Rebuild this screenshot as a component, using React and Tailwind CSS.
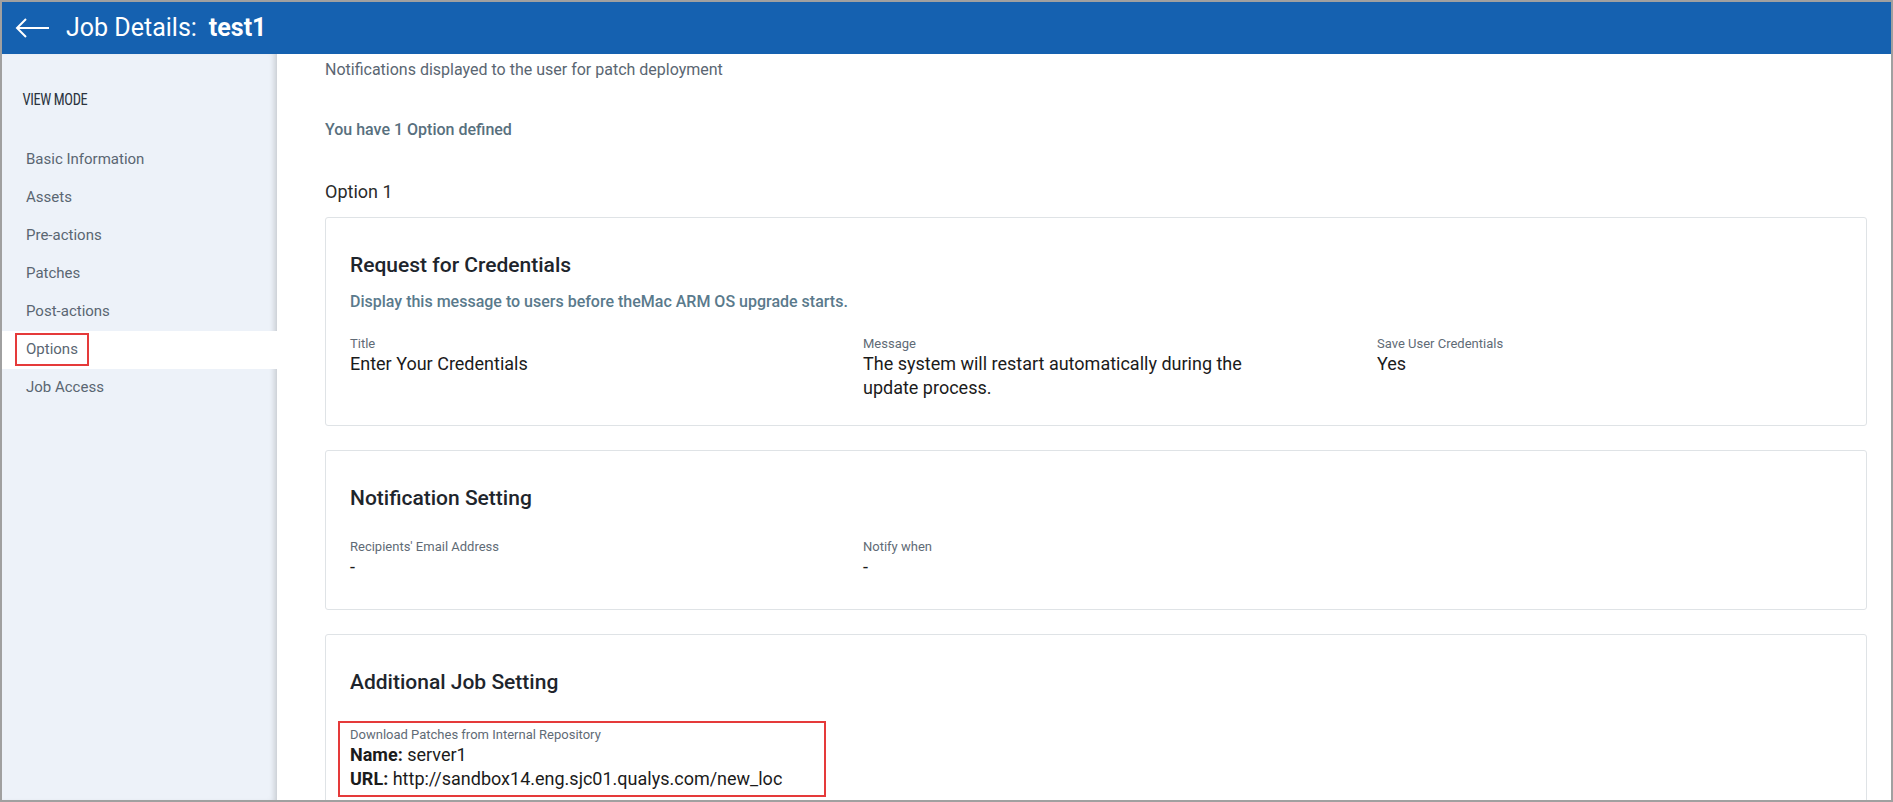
export default function App() {
  const nav = ["Basic Information", "Assets", "Pre-actions", "Patches", "Post-actions", "Options", "Job Access"];
  const Label = ({ children }) => <div className="text-[13px] text-[#5f6b76] leading-[16px]">{children}</div>;
  const Val = ({ children }) => <div className="text-[18px] text-[#1b1b1b] leading-[24px]">{children}</div>;
  return (
    <div className="w-[1893px] h-[802px] overflow-hidden border-2 border-[#a0a0a0] flex flex-col bg-white" style={{ fontFamily: "Roboto, 'Liberation Sans', sans-serif" }}>
      <div className="h-[52px] bg-[#1561b0] flex items-center px-[12px] text-white shrink-0">
        <svg width="36" height="22" viewBox="0 0 36 22" fill="none" stroke="white" strokeWidth="2"><path d="M35 11H3M12 2L3 11l9 9" /></svg>
        <span className="ml-[16px] text-[25px]">Job Details:</span>
        <span className="ml-[12px] text-[25px] font-bold">test1</span>
      </div>
      <div className="flex flex-1 min-h-0">
        <div className="w-[275px] shrink-0 bg-[#edf2f9] shadow-[inset_-6px_0_6px_-4px_rgba(0,0,0,0.18)]">
          <div className="pl-[24px] pt-[33px] text-[17px] text-[#2b3440] tracking-tight" style={{ fontFamily: "'Liberation Sans Narrow', 'Roboto Condensed', Roboto, sans-serif", transform: "scaleX(0.85)", transformOrigin: "left" }}>VIEW MODE</div>
          <div className="mt-[28px] flex flex-col">
            {nav.map((n) => (
              <div key={n} className={`h-[38px] flex items-center pl-[24px] text-[15px] text-[#5a6672] ${n === "Options" ? "bg-white" : ""}`}>
                {n === "Options" ? <span className="border-2 border-[#e53a3a] px-[9px] py-[3px] -ml-[11px]">Options</span> : n}
              </div>
            ))}
          </div>
        </div>
        <div className="flex-1 pl-[48px] pr-[24px] min-w-0">
          <div className="pt-[4px] text-[16px] text-[#5a6672]">Notifications displayed to the user for patch deployment</div>
          <div className="mt-[36px] text-[16px] font-medium text-[#58707e]">You have 1 Option defined</div>
          <div className="mt-[36px] text-[18px] text-[#2b2b2b]">Option 1</div>
          <div className="mt-[12px] border border-[#dfe3e6] rounded-[3px] h-[209px] px-[24px] pt-[32px]">
            <div className="text-[21px] font-medium text-[#1e252c]">Request for Credentials</div>
            <div className="mt-[8px] text-[16px] font-medium text-[#5a7a8c]">Display this message to users before theMac ARM OS upgrade starts.</div>
            <div className="mt-[22px] grid grid-cols-[513px_514px_1fr]">
              <div><Label>Title</Label><Val>Enter Your Credentials</Val></div>
              <div className="w-[430px]"><Label>Message</Label><Val>The system will restart automatically during the update process.</Val></div>
              <div><Label>Save User Credentials</Label><Val>Yes</Val></div>
            </div>
          </div>
          <div className="mt-[24px] border border-[#dfe3e6] rounded-[3px] h-[160px] px-[24px] pt-[32px]">
            <div className="text-[21px] font-medium text-[#1e252c]">Notification Setting</div>
            <div className="mt-[24px] grid grid-cols-[513px_1fr]">
              <div><Label>Recipients' Email Address</Label><Val>-</Val></div>
              <div><Label>Notify when</Label><Val>-</Val></div>
            </div>
          </div>
          <div className="mt-[24px] border border-[#dfe3e6] rounded-[3px] h-[200px] px-[24px] pt-[32px]">
            <div className="text-[21px] font-medium text-[#1e252c]">Additional Job Setting</div>
            <div className="mt-[22px] -ml-[12px] w-[488px] border-2 border-[#e53a3a] px-[10px] py-[4px]">
              <Label>Download Patches from Internal Repository</Label>
              <Val><b className="font-bold">Name:</b> server1</Val>
              <Val><b className="font-bold">URL:</b> http://sandbox14.eng.sjc01.qualys.com/new_loc</Val>
            </div>
          </div>
        </div>
      </div>
    </div>
  );
}
